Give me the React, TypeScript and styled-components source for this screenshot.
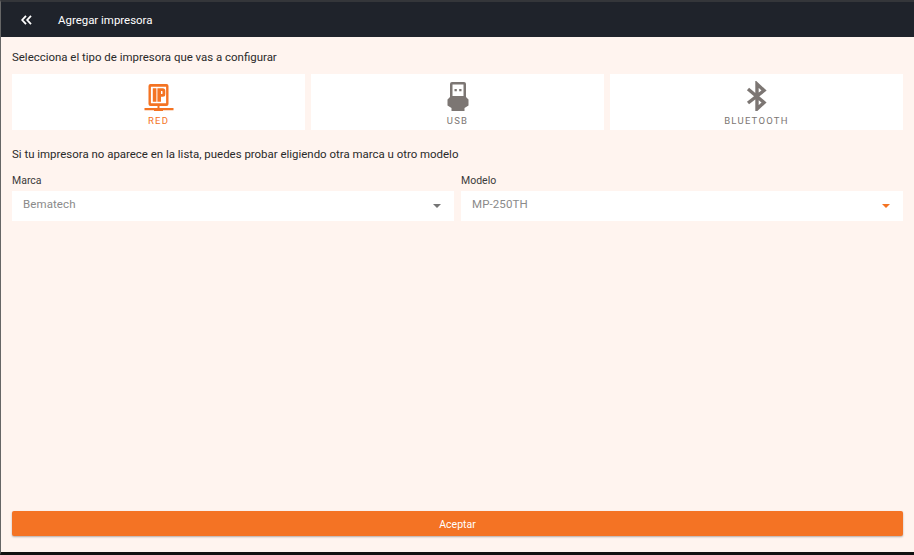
import React from "react";
import styled, { createGlobalStyle } from "styled-components";

const GlobalStyle = createGlobalStyle`
  html, body {
    margin: 0;
    padding: 0;
    height: 100%;
    background: #000;
  }
  #root {
    height: 100%;
  }
`;

const Screen = styled.div`
  box-sizing: border-box;
  width: 914px;
  height: 555px;
  display: flex;
  flex-direction: column;
  border-top: 2px solid #34363a;
  border-left: 1px solid #666;
  border-bottom: 3px solid #111;
  font-family: Roboto, "Liberation Sans", sans-serif;
  font-size: 11.45px;
  overflow: hidden;
`;

const Toolbar = styled.header`
  flex: none;
  height: 35px;
  display: flex;
  align-items: center;
  background: #1f232b;
  color: #fff;
`;

const BackButton = styled.button`
  width: 57px;
  height: 35px;
  flex: none;
  padding: 0 7px 0 0;
  margin: 0;
  border: 0;
  background: transparent;
  color: #fff;
  display: flex;
  align-items: center;
  justify-content: center;
`;

const Title = styled.h1`
  margin: 0;
  font-size: 11.45px;
  font-weight: 400;
`;

const Content = styled.main`
  flex: 1;
  min-height: 0;
  display: flex;
  flex-direction: column;
  padding: 0 11px 16px 11px;
  background: #fff4ef;
  color: #2a2a2a;
`;

const Intro = styled.p<{ $top: number }>`
  margin: ${({ $top }) => $top}px 0 0;
  height: 14px;
  line-height: 14px;
  font-size: 11.45px;
`;

const TypeRow = styled.div`
  display: grid;
  grid-template-columns: repeat(3, 1fr);
  gap: 6px;
  margin-top: 10px;
`;

const TypeCard = styled.button<{ $active?: boolean }>`
  height: 56px;
  padding: 7px 0 0;
  margin: 0;
  border: 0;
  background: #fff;
  color: ${({ $active }) => ($active ? "#f47322" : "#7c7673")};
  font-family: inherit;
  display: flex;
  flex-direction: column;
  align-items: center;
`;

const TypeIcon = styled.svg`
  width: 30px;
  height: 30px;
  display: block;
  flex: none;
`;

const TypeLabel = styled.span`
  margin-top: 4px;
  font-size: 9.5px;
  line-height: 12px;
  letter-spacing: 1.25px;
`;

const SelectRow = styled.div`
  display: grid;
  grid-template-columns: 442px 442px;
  gap: 7px;
  margin-top: 13px;
`;

const Field = styled.div`
  display: flex;
  flex-direction: column;
`;

const FieldLabel = styled.label`
  height: 14px;
  line-height: 14px;
  font-size: 10.5px;
  color: #3a3a3a;
`;

const SelectBox = styled.div`
  box-sizing: border-box;
  height: 30px;
  margin-top: 3px;
  padding: 0 13px 4px 11px;
  display: flex;
  align-items: center;
  justify-content: space-between;
  background: #fff;
  color: #8a8a8a;
  font-size: 11.5px;
  letter-spacing: 0.1px;
`;

const Caret = styled.span<{ $active?: boolean }>`
  width: 0;
  height: 0;
  margin-top: 3px;
  border-left: 4px solid transparent;
  border-right: 4px solid transparent;
  border-top: 4px solid ${({ $active }) => ($active ? "#f47322" : "#757575")};
`;

const AcceptButton = styled.button`
  height: 25px;
  margin: auto 0 0;
  padding: 1px 0 0;
  border: 0;
  border-radius: 2px;
  background: #f47324;
  color: #fff;
  font-family: inherit;
  font-size: 10.5px;
  box-shadow: 0 1px 2px rgba(0, 0, 0, 0.3);
`;

const RedIcon = () => (
  <TypeIcon viewBox="0 0 30 30" fill="currentColor">
    <path
      fillRule="evenodd"
      d="M6.500 3h16a2 2 0 0 1 2 2v18a2 2 0 0 1-2 2h-16a2 2 0 0 1-2-2V5a2 2 0 0 1 2-2zm.400 2.800v16.400h15.200V5.800H6.900z"
    />
    <path
      fillRule="evenodd"
      d="M8.800 7.200h3.600v13.600H8.800V7.200zm4.600 0h5.400a2.500 2.500 0 0 1 2.500 2.500v3.500a2.500 2.500 0 0 1-2.500 2.500h-1.800v5.100h-3.600V7.200zm3.600 2.800v3h1a.5.500 0 0 0 .5-.5v-2a.5.500 0 0 0-.5-.5h-1z"
    />
    <path d="M13.500 25h2v2H29.500v2.200H19v.8a1 1 0 0 1-1 1h-7a1 1 0 0 1-1-1v-.8H.5V27h13v-2z" />
  </TypeIcon>
);

const UsbIcon = () => (
  <TypeIcon viewBox="0 0 30 30" fill="currentColor">
    <path
      fillRule="evenodd"
      d="M9 1h12a2 2 0 0 1 2 2v13l2.500 2.500v6l-4 2.500v3h-13v-3l-4-2.500v-6L7 16V3a2 2 0 0 1 2-2zm.500 2.500V15h11V3.500h-11z"
    />
    <path d="M11.500 8h2.300v2.300h-2.300zM16.200 8h2.300v2.300h-2.300z" />
  </TypeIcon>
);

const BluetoothIcon = () => (
  <TypeIcon viewBox="0 0 30 30" fill="none" stroke="currentColor">
    <path d="M6 8 L22 21.500 L15 28 V3 L22 9.500 L6 22" strokeWidth="3.400" />
  </TypeIcon>
);

const App: React.FC = () => {
  return (
    <Screen>
      <GlobalStyle />
      <Toolbar>
        <BackButton aria-label="Volver">
          <svg width="11" height="10" viewBox="0 0 11 10" fill="none" stroke="currentColor" strokeWidth="1.800">
            <path d="M5 .8 1.200 5 5 9.200M10 .8 6.200 5 10 9.200" />
          </svg>
        </BackButton>
        <Title>Agregar impresora</Title>
      </Toolbar>
      <Content>
        <Intro $top={13}>Selecciona el tipo de impresora que vas a configurar</Intro>
        <TypeRow>
          <TypeCard $active>
            <RedIcon />
            <TypeLabel>RED</TypeLabel>
          </TypeCard>
          <TypeCard>
            <UsbIcon />
            <TypeLabel>USB</TypeLabel>
          </TypeCard>
          <TypeCard>
            <BluetoothIcon />
            <TypeLabel>BLUETOOTH</TypeLabel>
          </TypeCard>
        </TypeRow>
        <Intro $top={17}>Si tu impresora no aparece en la lista, puedes probar eligiendo otra marca u otro modelo</Intro>
        <SelectRow>
          <Field>
            <FieldLabel>Marca</FieldLabel>
            <SelectBox>
              Bematech
              <Caret />
            </SelectBox>
          </Field>
          <Field>
            <FieldLabel>Modelo</FieldLabel>
            <SelectBox>
              MP-250TH
              <Caret $active />
            </SelectBox>
          </Field>
        </SelectRow>
        <AcceptButton>Aceptar</AcceptButton>
      </Content>
    </Screen>
  );
};

export default App;
